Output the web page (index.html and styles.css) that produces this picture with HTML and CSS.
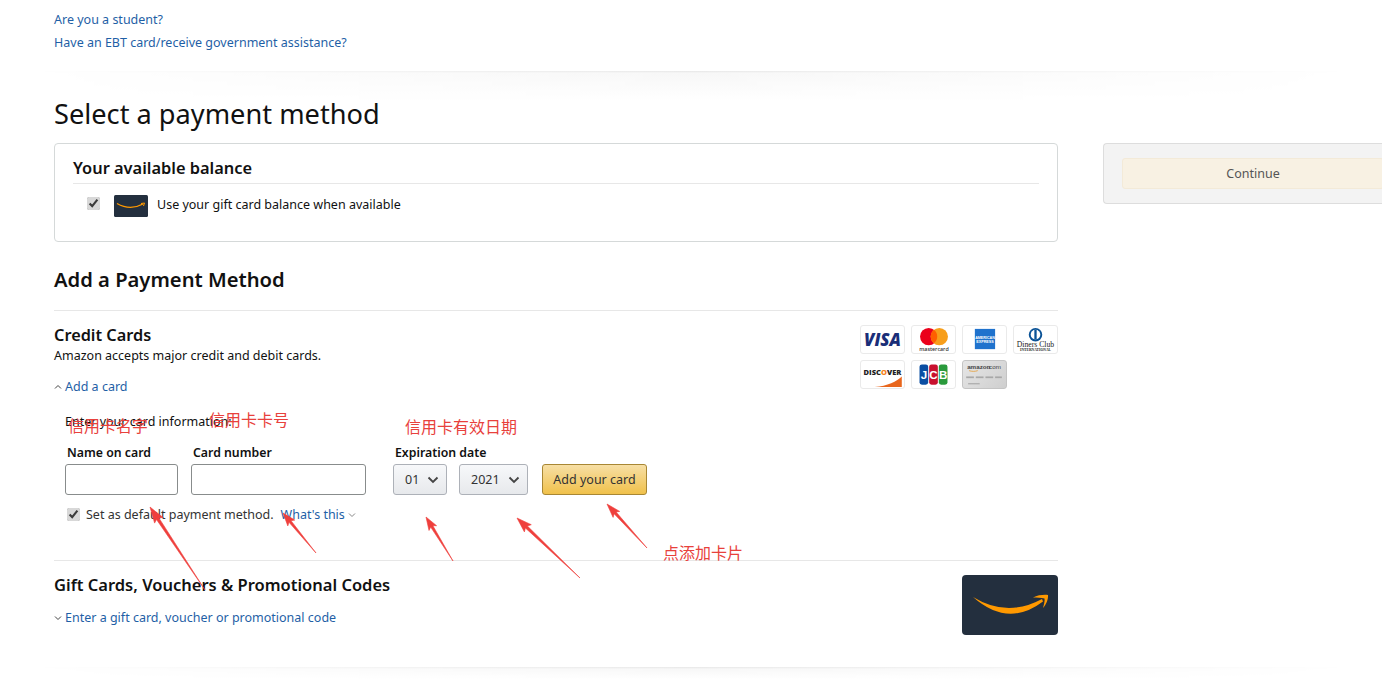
FILE: index.html
```html
<!DOCTYPE html>
<html lang="en">
<head>
<meta charset="utf-8">
<title>Select a payment method</title>
<link rel="stylesheet" href="styles.css">
</head>
<body>
<div class="page">
  <div class="top-links">
    <a class="link" href="#">Are you a student?</a>
    <a class="link" href="#">Have an EBT card/receive government assistance?</a>
  </div>
  <div class="fade fade-top"></div>
  <div class="layout">
    <main class="main">
      <h1 class="title">Select a payment method</h1>
      <section class="balance-box">
        <h2 class="balance-title">Your available balance</h2>
        <div class="balance-row">
          <input class="check" type="checkbox" checked>
          <svg class="gift-small" viewBox="0 0 34 22"><rect width="34" height="22" rx="1.500" fill="#232f3e"/><path d="M3 8.500Q16 16 29 9" fill="none" stroke="#f90" stroke-width="1.300"/><path d="M27 8.500l3.500-.5-1 3" fill="none" stroke="#f90" stroke-width="1"/></svg>
          <span class="balance-text">Use your gift card balance when available</span>
        </div>
      </section>
      <h2 class="section-title">Add a Payment Method</h2>
      <hr class="rule rule-a">
      <section class="credit">
        <div class="credit-head">
          <div>
            <h3 class="sub-title">Credit Cards</h3>
            <p class="accepts">Amazon accepts major credit and debit cards.</p>
          </div>
          <div class="logos">
            <div class="logo"><svg viewBox="0 0 44 28"><text x="22" y="20.500" text-anchor="middle" class="visa">VISA</text></svg></div>
            <div class="logo"><svg viewBox="0 0 44 28"><circle cx="17" cy="11" r="9" fill="#eb001b"/><circle cx="28" cy="11" r="9" fill="#f79e1b"/><path d="M22.500 4a9 9 0 0 1 0 14a9 9 0 0 1 0-14z" fill="#ff5f00"/><text x="22.500" y="25.500" text-anchor="middle" class="mc">mastercard</text></svg></div>
            <div class="logo"><svg viewBox="0 0 44 28"><rect x="12" y="3" width="21" height="21" fill="#1f72cd"/><text x="22.500" y="13" text-anchor="middle" class="amex">AMERICAN</text><text x="22.500" y="17.500" text-anchor="middle" class="amex">EXPRESS</text></svg></div>
            <div class="logo"><svg viewBox="0 0 44 28"><circle cx="22" cy="9" r="7" fill="#0a5296"/><circle cx="22" cy="9" r="5" fill="#fff"/><rect x="20.800" y="4" width="2.400" height="10" fill="#0a5296"/><text x="22" y="21.500" text-anchor="middle" class="diners">Diners Club</text><text x="22" y="26" text-anchor="middle" class="intl">INTERNATIONAL</text></svg></div>
            <div class="logo"><svg viewBox="0 0 44 28"><path d="M42 16V27H14C27 26 37 21 42 16z" fill="#e8661d"/><text x="22" y="15" text-anchor="middle" class="disc">DISC<tspan class="disc-o">O</tspan>VER</text></svg></div>
            <div class="logo"><svg viewBox="0 0 44 28"><rect x="7.500" y="3.500" width="9" height="21" rx="2.500" fill="#0b4ea2"/><rect x="17.500" y="3.500" width="9" height="21" rx="2.500" fill="#c8102e"/><rect x="27.500" y="3.500" width="9" height="21" rx="2.500" fill="#2a9a3c"/><text x="12" y="18.500" text-anchor="middle" class="jcb">J</text><text x="22" y="18.500" text-anchor="middle" class="jcb">C</text><text x="32" y="18.500" text-anchor="middle" class="jcb">B</text></svg></div>
            <div class="logo logo-amz"><svg viewBox="0 0 44 28"><text x="4" y="8.500" class="amz">amazon</text><text x="25" y="8.500" class="amz2">.com</text><path d="M6 10c3 1 6 1 9 0" stroke="#e59a2c" stroke-width=".8" fill="none"/><rect x="3" y="16" width="8" height="1.800" fill="#a8a8a8"/><rect x="13" y="16" width="8" height="1.800" fill="#a8a8a8"/><rect x="23" y="16" width="8" height="1.800" fill="#a8a8a8"/><rect x="33" y="16" width="7" height="1.800" fill="#a8a8a8"/><rect x="5" y="23" width="12" height="1.200" fill="#a8a8a8"/></svg></div>
          </div>
        </div>
        <a class="link toggle" href="#"><svg class="chev" viewBox="0 0 8 8"><path d="M1 5.500l3-3 3 3" /></svg>Add a card</a>
        <div class="card-form">
          <p class="enter">Enter your card information:</p>
          <div class="fields">
            <label class="field field-name"><span class="label">Name on card</span><input class="input" type="text"></label>
            <label class="field field-number"><span class="label">Card number</span><input class="input" type="text"></label>
            <div class="field field-exp">
              <span class="label">Expiration date</span>
              <div class="exp-row">
                <span class="select sel-month">01<svg class="sel-chev" viewBox="0 0 12 8"><path d="M1.500 1.500L6 6l4.500-4.500"/></svg></span>
                <span class="select sel-year">2021<svg class="sel-chev" viewBox="0 0 12 8"><path d="M1.500 1.500L6 6l4.500-4.500"/></svg></span>
                <button class="add-btn" type="button">Add your card</button>
              </div>
            </div>
          </div>
          <div class="default-row">
            <input class="check" type="checkbox" checked>
            <span>Set as default payment method.</span>
            <a class="link whats" href="#">What's this<svg class="chev chev-g" viewBox="0 0 8 8"><path d="M1 2.500l3 3 3-3"/></svg></a>
          </div>
        </div>
      </section>
      <hr class="rule rule-b">
      <section class="gift">
        <div>
          <h3 class="gift-title">Gift Cards, Vouchers &amp; Promotional Codes</h3>
          <a class="link toggle gift-link" href="#"><svg class="chev" viewBox="0 0 8 8"><path d="M1 2.500l3 3 3-3"/></svg>Enter a gift card, voucher or promotional code</a>
        </div>
        <svg class="gift-big" viewBox="0 0 96 60"><rect width="96" height="60" rx="4" fill="#232f3e"/><path d="M11 22Q45 43 80 24L81 26.500Q46 53 11 22z" fill="#f90"/><path d="M71 22.500C76 20 82 19.500 86 20C86.500 24 84 30 81 33C82 29 83 26 82.500 23.500C79 22.500 75 23 71 22.500z" fill="#f90"/></svg>
      </section>
    </main>
    <aside class="side">
      <div class="continue-box"><button class="continue" type="button">Continue</button></div>
    </aside>
  </div>
  <div class="fade fade-bottom"></div>

  <span class="note note-1">信用卡名字</span>
  <span class="note note-2">信用卡卡号</span>
  <span class="note note-3">信用卡有效日期</span>
  <span class="note note-4">点添加卡片</span>
  <svg class="arrows" viewBox="0 0 1382 679">
    <polygon class="arrow" points="205,590 158.900,517.900 163,517.500 150,507 154.600,523.100 156.500,519.500"/>
    <polygon class="arrow" points="316,553 291,520.700 294.800,520.100 283,513 287.800,525.900 289,522.300"/>
    <polygon class="arrow" points="453,561 432.900,525.700 436.600,525.700 426,517 429,530.500 430.700,527.100"/>
    <polygon class="arrow" points="580,578 527.400,526 531.300,524.700 517,518 524.400,531.900 525.400,528"/>
    <polygon class="arrow" points="647,548 616.100,512 619.700,511.400 607,504 613.100,517.400 614.100,513.800"/>
  </svg>
</div>
</body>
</html>
```
FILE: styles.css
```css
* { box-sizing: border-box; }
html, body { margin: 0; padding: 0; background: #fff; overflow: hidden; }
body { font-family: "Noto Sans", "Open Sans", sans-serif; font-size: 12.5px; line-height: 19px; color: #111; }
.page { position: relative; width: 1382px; height: 679px; overflow: hidden; }
.link { color: #1f5fa6; text-decoration: none; }
.top-links { display: flex; flex-direction: column; gap: 4px; padding: 10px 0 0 54px; height: 71px; }
.fade { height: 30px; background: linear-gradient(to bottom, #e6e6e6 0, #f7f7f7 2px, #fff 100%); -webkit-mask-image: linear-gradient(to right, transparent 2%, #000 50%, transparent 98%); mask-image: linear-gradient(to right, transparent 2%, #000 50%, transparent 98%); }
.fade-top { margin-bottom: -30px; }
.fade-bottom { position: absolute; left: 0; right: 0; top: 667px; height: 12px; }
.layout { display: flex; padding-left: 54px; gap: 45px; }
.main { width: 1004px; flex: none; }
.title { margin: 24px 0 10px; font-size: 27.200px; line-height: 38px; font-weight: 400; color: #111; }
.balance-box { height: 99px; border: 1px solid #d5d9d9; border-radius: 4px; padding: 13px 18px 0; }
.balance-title { margin: 0; padding-bottom: 5px; font-size: 16.400px; line-height: 21px; font-weight: 600; border-bottom: 1px solid #e7e7e7; }
.balance-row { display: flex; align-items: center; padding: 10px 0 0 14px; }
.balance-row .check { margin: -4px 14px 0 0; }
.balance-text { padding-bottom: 2px; }
.check { width: 13px; height: 13px; flex: none; accent-color: #d8d8d8; }
.gift-small { width: 34px; height: 22px; margin: 1px 9px 0 0; flex: none; }
.section-title { margin: 23px 0 0; font-size: 20.200px; line-height: 28px; font-weight: 600; }
.rule { border: 0; border-top: 1px solid #e7e7e7; margin: 0; }
.rule-a { margin-top: 17px; }
.credit { height: 249px; }
.credit-head { display: flex; justify-content: space-between; height: 68px; padding-top: 14px; }
.sub-title { margin: 0; font-size: 16.300px; line-height: 21px; font-weight: 600; }
.accepts { margin: 0; line-height: 19px; }
.logos { display: grid; grid-template-columns: repeat(4, 45px); grid-auto-rows: 29px; gap: 6px; height: 64px; }
.logo { border: 1px solid #eaeaea; border-radius: 3px; background: #fff; }
.logo svg { display: block; width: 100%; height: 100%; }
.logo-amz { background: linear-gradient(135deg, #e6e6e6, #cfcfcf); border-color: #c4c4c4; }
.visa { font: italic 800 17.500px "Open Sans", sans-serif; fill: #1a2e78; }
.mc { font: 600 5.500px "Open Sans", sans-serif; fill: #333; }
.amex { font: 700 3.800px "Liberation Sans", sans-serif; fill: #fff; }
.diners { font: 8px "Liberation Serif", serif; fill: #222; }
.intl { font: 700 3.800px "Liberation Serif", serif; fill: #222; }
.disc { font: 800 7.800px "Open Sans", sans-serif; fill: #222; }
.disc-o { fill: #f58220; }
.jcb { font: 700 12px "Liberation Sans", sans-serif; fill: #fff; }
.amz { font: 700 6.500px "Liberation Sans", sans-serif; fill: #444; }
.amz2 { font: 6.500px "Liberation Sans", sans-serif; fill: #444; }
.toggle { display: flex; align-items: center; margin-top: -2px; }
.chev { width: 8px; height: 8px; flex: none; margin-right: 3px; fill: none; stroke: #444; stroke-width: 1; }
.chev-g { margin: 0 0 0 3px; stroke: #888; }
.card-form { padding: 0 0 0 11px; }
.enter { margin: 0; padding-top: 16px; line-height: 19px; }
.fields { display: flex; padding-top: 12px; }
.field { display: flex; flex-direction: column; }
.label { font-size: 12.300px; line-height: 19px; font-weight: 600; padding-left: 2px; margin-bottom: 2px; }
.field-name { width: 113px; margin-right: 13px; }
.field-number { width: 175px; margin-right: 27px; }
.input { height: 31px; width: 100%; border: 1px solid #888c8c; border-radius: 3px; background: #fff; padding: 0 6px; }
.exp-row { display: flex; align-items: stretch; }
.select { display: flex; align-items: center; justify-content: space-between; height: 31px; border: 1px solid #adb1b8; border-radius: 3px; background: linear-gradient(to bottom, #f7f8fa, #e7e9ec); padding: 0 7px 0 11px; color: #333; }
.sel-month { width: 54px; margin-right: 12px; }
.sel-year { width: 69px; margin-right: 14px; }
.sel-chev { width: 12px; height: 8px; fill: none; stroke: #444; stroke-width: 1.800; }
.add-btn { width: 105px; height: 31px; padding: 0; border: 1px solid #a88734; border-radius: 3px; background: linear-gradient(to bottom, #f7dfa5, #f0c14b); font: inherit; color: #333; }
.default-row { display: flex; align-items: center; padding: 10px 0 0 2px; color: #333; }
.default-row .check { margin: 0 6px 0 0; }
.whats { display: flex; align-items: center; margin-left: 7px; }
.gift { display: flex; justify-content: space-between; padding-top: 13px; }
.gift-title { margin: 0; font-size: 16.500px; line-height: 21px; font-weight: 600; }
.gift-link { margin-top: 13px; }
.gift-big { width: 96px; height: 60px; flex: none; margin-top: 1px; }
.side { flex: 1; padding-top: 72px; }
.continue-box { height: 61px; background: #f3f3f3; border: 1px solid #ddd; border-right: 0; border-radius: 4px 0 0 4px; padding: 14px 0 0 18px; }
.continue { display: block; width: 262px; height: 31px; padding: 0; border: 1px solid #f3ead8; border-radius: 3px; background: #f8f1e3; color: #555; font: inherit; }
.note { position: absolute; color: #e8413c; font-family: "Noto Sans CJK SC", sans-serif; font-size: 16px; line-height: 20px; }
.note-1 { left: 68px; top: 415px; }
.note-2 { left: 209px; top: 409px; }
.note-3 { left: 405px; top: 416px; }
.note-4 { left: 663px; top: 542px; }
.arrows { position: absolute; left: 0; top: 0; width: 1382px; height: 679px; pointer-events: none; }
.arrow { fill: #ef3f3c; stroke: #ef3f3c; stroke-width: .6; }
```
